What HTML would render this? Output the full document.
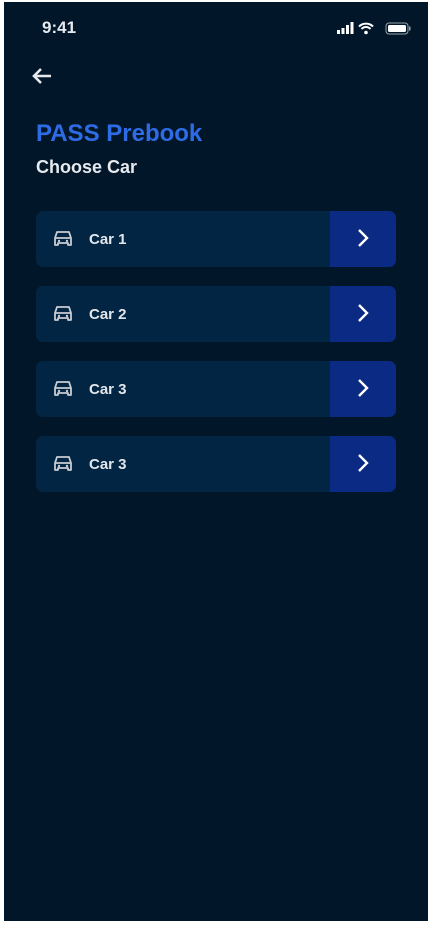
<!DOCTYPE html>
<html><head><meta charset="utf-8"><style>
body{margin:0;width:430px;height:926px;background:#fff;overflow:hidden;font-family:"Liberation Sans",sans-serif}
.ph{position:absolute;left:4px;top:2px;width:424px;height:919px;background:#011729}
.t{position:absolute;color:#e6e9ee;font-weight:bold}
.card{position:absolute;left:36px;width:360px;height:56px;background:#022543;border-radius:7px;overflow:hidden}
.card .b{position:absolute;right:0;top:0;width:66px;height:56px;background:#0a2a84}
.card span{position:absolute;left:53px;top:20px;color:#e3e6ea;font-weight:bold;font-size:15px}
.card svg.c{position:absolute;left:16px;top:18px}
.card svg.a{position:absolute;left:22px;top:16px}
</style></head><body>
<div class="ph"></div>
<div class="t" style="left:42px;top:18px;font-size:17px">9:41</div>
<svg style="position:absolute;left:337px;top:22px" width="74" height="14">
<rect x="0" y="8" width="3" height="4" fill="#fff"/><rect x="4.5" y="6" width="3" height="6" fill="#fff"/><rect x="9" y="3" width="3" height="9" fill="#fff"/><rect x="13.5" y="0" width="3" height="12" fill="#fff"/>
<path d="M22 4.5a10 10 0 0 1 14 0M24.5 7a6 6 0 0 1 9 0" stroke="#fff" stroke-width="2" fill="none"/><circle cx="29" cy="10.5" r="1.8" fill="#fff"/>
<rect x="49" y="1" width="22" height="11" rx="3" fill="none" stroke="#fff" stroke-opacity=".6"/><rect x="51" y="3" width="18" height="7" rx="1.5" fill="#fff"/><rect x="72" y="4.5" width="1.5" height="4" fill="#fff" fill-opacity=".6"/>
</svg>
<svg style="position:absolute;left:30px;top:66px" width="24" height="20"><path d="M21 10H4M11 3L4 10l7 7" stroke="#e6e9ee" stroke-width="2.6" fill="none"/></svg>
<div class="t" style="left:36px;top:120px;font-size:24px;color:#2e6be6">PASS Prebook</div>
<div class="t" style="left:36px;top:157px;font-size:18px">Choose Car</div>
<div class="card" style="top:211px"><svg class="c" width="22" height="20" viewBox="0 0 22 20"><path d="M5 3h12l2 6v7h-3v-2H6v2H3V9z M3 9h16" stroke="#c9ccd2" stroke-width="1.8" fill="none" stroke-linejoin="round"/><circle cx="7" cy="12" r="1.2" fill="#c9ccd2"/><circle cx="15" cy="12" r="1.2" fill="#c9ccd2"/></svg><span>Car 1</span><div class="b"><svg class="a" width="22" height="22"><path d="M7 3l8 8-8 8" stroke="#fff" stroke-width="2.4" fill="none"/></svg></div></div>
<div class="card" style="top:286px"><svg class="c" width="22" height="20" viewBox="0 0 22 20"><path d="M5 3h12l2 6v7h-3v-2H6v2H3V9z M3 9h16" stroke="#c9ccd2" stroke-width="1.8" fill="none" stroke-linejoin="round"/><circle cx="7" cy="12" r="1.2" fill="#c9ccd2"/><circle cx="15" cy="12" r="1.2" fill="#c9ccd2"/></svg><span>Car 2</span><div class="b"><svg class="a" width="22" height="22"><path d="M7 3l8 8-8 8" stroke="#fff" stroke-width="2.4" fill="none"/></svg></div></div>
<div class="card" style="top:361px"><svg class="c" width="22" height="20" viewBox="0 0 22 20"><path d="M5 3h12l2 6v7h-3v-2H6v2H3V9z M3 9h16" stroke="#c9ccd2" stroke-width="1.8" fill="none" stroke-linejoin="round"/><circle cx="7" cy="12" r="1.2" fill="#c9ccd2"/><circle cx="15" cy="12" r="1.2" fill="#c9ccd2"/></svg><span>Car 3</span><div class="b"><svg class="a" width="22" height="22"><path d="M7 3l8 8-8 8" stroke="#fff" stroke-width="2.4" fill="none"/></svg></div></div>
<div class="card" style="top:436px"><svg class="c" width="22" height="20" viewBox="0 0 22 20"><path d="M5 3h12l2 6v7h-3v-2H6v2H3V9z M3 9h16" stroke="#c9ccd2" stroke-width="1.8" fill="none" stroke-linejoin="round"/><circle cx="7" cy="12" r="1.2" fill="#c9ccd2"/><circle cx="15" cy="12" r="1.2" fill="#c9ccd2"/></svg><span>Car 3</span><div class="b"><svg class="a" width="22" height="22"><path d="M7 3l8 8-8 8" stroke="#fff" stroke-width="2.4" fill="none"/></svg></div></div>
</body></html>
